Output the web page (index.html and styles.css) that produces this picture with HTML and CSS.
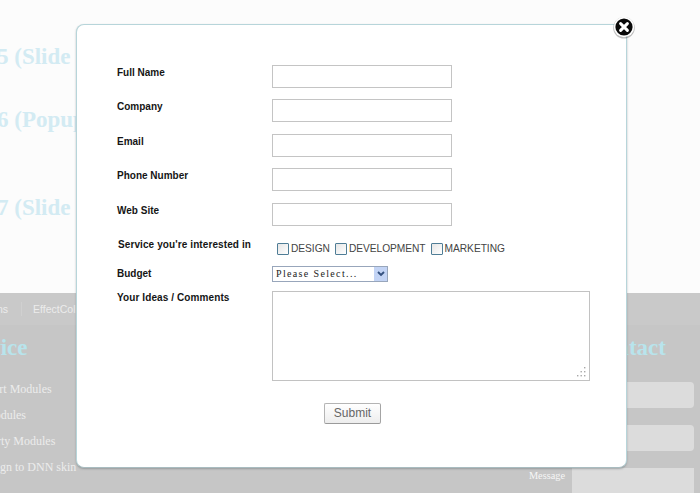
FILE: index.html
```html
<!DOCTYPE html>
<html lang="en">
<head>
<meta charset="utf-8">
<title>Contact form popup</title>
<link rel="stylesheet" href="styles.css">
</head>
<body>
<div class="page">
  <section class="top">
    <h2 class="demo demo-five">5 (Slide</h2>
    <h2 class="demo demo-six">6 (Popup</h2>
    <h2 class="demo demo-seven">7 (Slide</h2>
  </section>
  <footer class="foot">
    <nav class="nav">
      <span class="nav-item nav-first">ns</span>
      <span class="nav-sep"></span>
      <span class="nav-item">EffectCol</span>
    </nav>
    <div class="foot-cols">
      <div class="service">
        <h3 class="foot-title">Service</h3>
        <ul class="links">
          <li>Smart Modules</li>
          <li class="link-two">Modules</li>
          <li class="link-three">Party Modules</li>
          <li class="link-four">Design to DNN skin</li>
        </ul>
      </div>
      <div class="contact">
        <h3 class="foot-title">Contact</h3>
        <div class="contact-field"></div>
        <div class="contact-field"></div>
        <div class="contact-msg">
          <span class="contact-label">Message</span>
          <div class="contact-area"></div>
        </div>
      </div>
    </div>
  </footer>
  <div class="modal">
    <form class="form">
      <div class="row"><label class="lab">Full Name</label><input class="text" type="text"></div>
      <div class="row"><label class="lab">Company</label><input class="text" type="text"></div>
      <div class="row"><label class="lab">Email</label><input class="text" type="text"></div>
      <div class="row"><label class="lab">Phone Number</label><input class="text" type="text"></div>
      <div class="row"><label class="lab">Web Site</label><input class="text" type="text"></div>
      <div class="row-service">
        <label class="lab lab-service">Service you're interested in</label>
        <div class="checks">
          <input class="check" type="checkbox"><span class="check-text">DESIGN</span>
          <input class="check" type="checkbox"><span class="check-text">DEVELOPMENT</span>
          <input class="check" type="checkbox"><span class="check-text">MARKETING</span>
        </div>
      </div>
      <div class="row-budget">
        <label class="lab lab-budget">Budget</label>
        <div class="select">
          <span class="select-text">Please Select...</span>
          <span class="select-btn">
            <svg width="10" height="8" viewBox="0 0 10 8"><path d="M2 2 L5 5 L8 2" fill="none" stroke="#34517f" stroke-width="1.9"/></svg>
          </span>
        </div>
      </div>
      <div class="row-ideas">
        <label class="lab lab-ideas">Your Ideas / Comments</label>
        <div class="area-wrap">
          <textarea class="area"></textarea>
          <svg class="grip" width="12" height="12" viewBox="0 0 12 12"><g fill="#a8a8a8"><rect x="9" y="1" width="1.4" height="1.4"/><rect x="5.5" y="5" width="1.4" height="1.4"/><rect x="9" y="5" width="1.4" height="1.4"/><rect x="2" y="9" width="1.4" height="1.4"/><rect x="5.5" y="9" width="1.4" height="1.4"/><rect x="9" y="9" width="1.4" height="1.4"/></g></svg>
        </div>
      </div>
      <div class="actions"><button class="submit" type="button">Submit</button></div>
    </form>
    <svg class="close" width="24" height="24" viewBox="0 0 24 24">
      <circle cx="12" cy="12.8" r="10.8" fill="#000" opacity=".25"/>
      <circle cx="12" cy="12" r="10.2" fill="#fff"/>
      <circle cx="12" cy="12" r="8.6" fill="#0a0a0a"/>
      <path d="M8.6 8.6 L15.4 15.4 M15.4 8.6 L8.6 15.4" stroke="#fff" stroke-width="3" stroke-linecap="round"/>
    </svg>
  </div>
</div>
</body>
</html>
```

FILE: styles.css
```css
* { box-sizing: border-box; }
html, body { margin: 0; padding: 0; }
body { width: 700px; height: 493px; overflow: hidden; font-family: "Liberation Sans", Arial, sans-serif; }
.page { position: relative; width: 700px; height: 493px; overflow: hidden; background: #c8c8c8; }

.top { height: 293px; background: #fcfcfc; padding-top: 44px; }
.demo { margin: 0 0 0 -3px; font: bold 23px/26px "Liberation Serif", serif; color: #d3ebf3; white-space: nowrap; }
.demo-six { margin-top: 37px; }
.demo-seven { margin-top: 62px; }

.foot { height: 200px; background: #c6c6c6; }
.nav { height: 32px; background: #c9c9c9; display: flex; align-items: center; color: #ececec; font-size: 10.5px; }
.nav-first { margin-left: -3px; }
.nav-sep { width: 1px; height: 14px; background: #d0d0d0; margin: 0 11px 0 13px; }

.foot-cols { display: flex; justify-content: space-between; }
.foot-title { margin: 0; font: bold 23px/26px "Liberation Serif", serif; color: #b8e4ec; white-space: nowrap; }
.service { margin-left: -44px; padding-top: 10px; }
.links { list-style: none; margin: 15px 0 0 22px; padding: 0; font: 12px/26px "Liberation Serif", serif; color: #ececec; white-space: nowrap; }
.link-two { margin-left: 6px; }
.link-three { margin-left: 7px; }
.link-four { margin-left: 0; }

.contact { width: 122px; margin-right: 6px; padding-top: 10px; position: relative; }
.contact .foot-title { margin-left: 16px; }
.contact-field { height: 26px; margin-top: 17px; background: #dcdcdc; border-radius: 4px; }
.contact-field:first-of-type { margin-top: 21px; }
.contact-msg { margin-top: 17px; position: relative; }
.contact-area { height: 40px; background: #dcdcdc; }
.contact-label { position: absolute; right: 129px; top: 1px; font: 10.3px/14px "Liberation Serif", serif; color: #f6f6f6; }

.modal { position: absolute; left: 76px; top: 24px; width: 551px; height: 444px; background: #fff; border: 1px solid #b7d5da; border-bottom-color: #a9bcc0; border-radius: 8px; box-shadow: 0 1px 2px rgba(90, 100, 105, .45); }
.form { padding: 40px 0 0 40px; }
.row { display: flex; height: 34.4px; }
.lab { display: block; width: 155px; flex: none; font-size: 10px; font-weight: bold; line-height: 13px; color: #151515; padding-top: 1px; }
.text { width: 180px; height: 23px; margin: 0; border: 1px solid #c4c4c4; background: #fff; padding: 0 3px; }

.row-service { display: flex; height: 29px; }
.lab-service { padding: 1px 0 0 1px; letter-spacing: .1px; }
.checks { display: flex; align-items: center; height: 22px; padding: 2px 0 0 5px; }
.check { appearance: none; -webkit-appearance: none; width: 12px; height: 12px; margin: 0 2px 0 0; border: 1px solid #4f7d96; background: linear-gradient(135deg, #e6e6e6, #fff); border-radius: 1px; }
.check-text { font-size: 10.2px; color: #444; margin-right: 5px; letter-spacing: -.03px; }

.row-budget { display: flex; height: 25px; }
.lab-budget { padding-top: 1px; }
.select { width: 116px; height: 16px; display: flex; justify-content: space-between; border: 1px solid #98a6bb; background: #fff; }
.select-text { font: 10px/14px "Liberation Serif", serif; letter-spacing: 1.35px; color: #222; padding-left: 3px; white-space: nowrap; }
.select-btn { width: 13px; height: 14px; background: #c3d4f5; display: flex; align-items: center; justify-content: center; }

.row-ideas { display: flex; height: 110px; }
.lab-ideas { padding-top: 0; letter-spacing: .1px; }
.area-wrap { position: relative; width: 318px; height: 90px; }
.area { display: block; width: 318px; height: 90px; margin: 0; border: 1px solid #c2c2c2; background: #fff; resize: none; }
.grip { position: absolute; right: 3px; bottom: 3px; }

.actions { padding-left: 207px; margin-top: 2px; }
.submit { width: 57px; height: 21px; padding: 0; font: 12px "Liberation Sans", Arial, sans-serif; color: #666; border: 1px solid #b4b4b4; border-bottom-color: #9a9a9a; border-right-color: #a4a4a4; border-radius: 2px; background: linear-gradient(#fff, #ededed); }

.close { position: absolute; right: -10px; top: -10px; }
```
